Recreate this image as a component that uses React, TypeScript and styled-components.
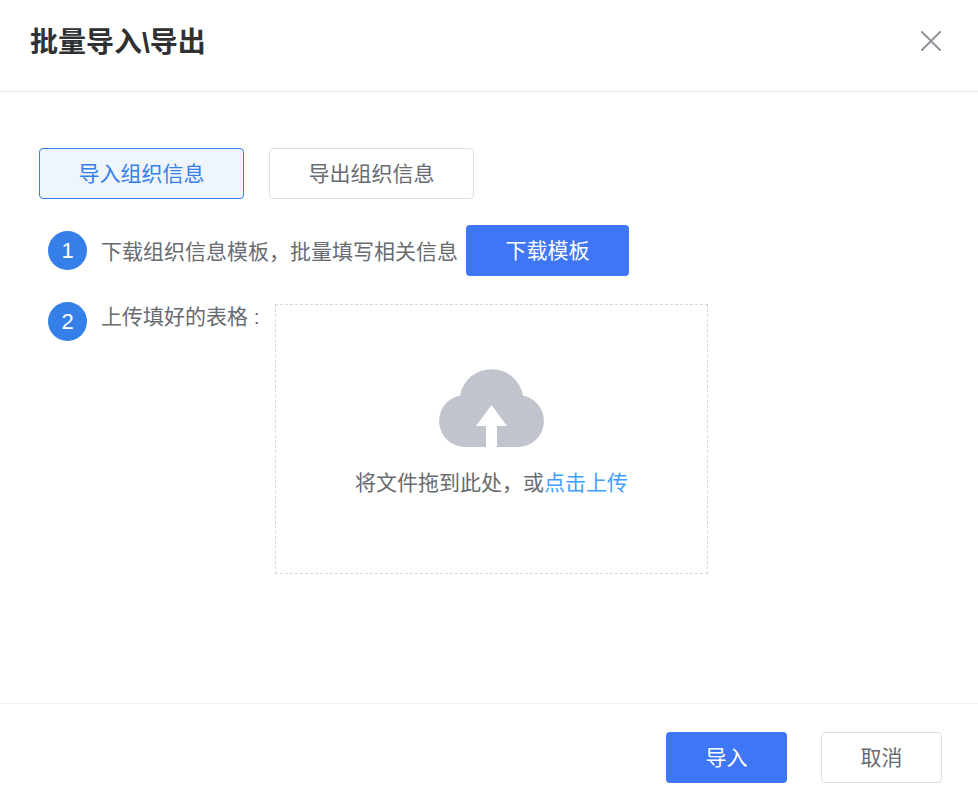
import { createGlobalStyle, styled } from 'styled-components';

const GlobalStyle = createGlobalStyle`
  html,
  body {
    margin: 0;
    padding: 0;
    background: #fff;
  }

  * {
    box-sizing: border-box;
  }
`;

const Dialog = styled.div`
  width: 978px;
  height: 793px;
  display: flex;
  flex-direction: column;
  overflow: hidden;
  background: #fff;
  color: #686b70;
  font-family: 'Liberation Sans', 'Noto Sans CJK SC', sans-serif;
  font-size: 21px;
`;

const Header = styled.header`
  height: 92px;
  flex-shrink: 0;
  display: flex;
  align-items: center;
  justify-content: space-between;
  padding: 0 37px 9px 30px;
  border-bottom: 1px solid #e8e9ed;
`;

const Title = styled.h1`
  margin: 4px 0 0;
  font-size: 28px;
  font-weight: 700;
  line-height: 40px;
  color: #303133;
`;

const CloseButton = styled.button`
  width: 20px;
  height: 20px;
  padding: 0;
  display: block;
  border: 0;
  background: none;
  color: #909399;
`;

const Body = styled.main`
  flex: 1;
  padding: 56px 39px 0;
`;

const Tabs = styled.div`
  display: flex;
  column-gap: 25px;
  margin-bottom: 26px;
`;

const Tab = styled.button<{ $active?: boolean }>`
  width: 205px;
  height: 51px;
  padding: 0 0 4px;
  font: inherit;
  border: 1px solid ${(p) => (p.$active ? '#3580e8' : '#dcdfe6')};
  border-radius: 4px;
  background: ${(p) => (p.$active ? '#eef5fd' : '#fff')};
  color: ${(p) => (p.$active ? '#3580e8' : '#686b70')};
`;

const DownloadRow = styled.div`
  display: flex;
  align-items: center;
  padding-left: 9px;
  height: 51px;
  margin-bottom: 26px;
`;

const UploadRow = styled.div`
  display: flex;
  align-items: flex-start;
  padding-left: 9px;
`;

const StepNumber = styled.span`
  width: 39px;
  height: 39px;
  flex-shrink: 0;
  display: flex;
  align-items: center;
  justify-content: center;
  margin-right: 14px;
  border-radius: 50%;
  background: #3580e8;
  color: #fff;
  font-size: 22px;
`;

const StepText = styled.span`
  white-space: nowrap;
  line-height: 30px;
  padding-top: 2px;
`;

const UploadLabel = styled(StepText)`
  width: 174px;
  flex-shrink: 0;
  margin-top: -2px;
`;

const PrimaryButton = styled.button`
  height: 51px;
  padding: 0 0 4px;
  font: inherit;
  border: 0;
  border-radius: 4px;
  background: #3e76f6;
  color: #fff;
`;

const DownloadButton = styled(PrimaryButton)`
  width: 163px;
  margin-left: 8px;
`;

const DropZone = styled.div`
  width: 433px;
  height: 270px;
  margin-top: 2px;
  display: flex;
  flex-direction: column;
  align-items: center;
  padding-top: 64px;
  border: 1px dashed #d9d9d9;
`;

const CloudIcon = styled.svg`
  display: block;
  margin-bottom: 20px;
`;

const DropText = styled.div`
  line-height: 32px;
  white-space: nowrap;
`;

const UploadLink = styled.em`
  font-style: normal;
  color: #409eff;
`;

const Footer = styled.footer`
  height: 90px;
  flex-shrink: 0;
  display: flex;
  justify-content: flex-end;
  column-gap: 34px;
  padding: 28px 36px 0 0;
  border-top: 1px solid #eeeff2;
`;

const FooterPrimary = styled(PrimaryButton)`
  width: 121px;
`;

const CancelButton = styled.button`
  width: 121px;
  height: 51px;
  padding: 0 0 4px;
  font: inherit;
  border: 1px solid #dcdfe6;
  border-radius: 4px;
  background: #fff;
  color: #686b70;
`;

export default function App() {
  return (
    <>
      <GlobalStyle />
      <Dialog>
        <Header>
          <Title>批量导入\导出</Title>
          <CloseButton aria-label="关闭">
            <svg width="20" height="20" viewBox="0 0 20 20" fill="none">
              <path
                d="M1 1 19 19M19 1 1 19"
                stroke="currentColor"
                strokeWidth="2"
                strokeLinecap="round"
              />
            </svg>
          </CloseButton>
        </Header>
        <Body>
          <Tabs>
            <Tab $active>导入组织信息</Tab>
            <Tab>导出组织信息</Tab>
          </Tabs>
          <DownloadRow>
            <StepNumber>1</StepNumber>
            <StepText>下载组织信息模板，批量填写相关信息</StepText>
            <DownloadButton>下载模板</DownloadButton>
          </DownloadRow>
          <UploadRow>
            <StepNumber>2</StepNumber>
            <UploadLabel>上传填好的表格 :</UploadLabel>
            <DropZone>
              <CloudIcon width="105" height="78" viewBox="0 0 105 78">
                <path
                  d="M26 78A26 26 0 0 1 21 26.5 32 32 0 0 1 84 26.5 26 26 0 0 1 79 78Z"
                  fill="#c0c4cc"
                />
                <path d="M52.5 36 68 57H58V78H47V57H37Z" fill="#fff" />
              </CloudIcon>
              <DropText>
                将文件拖到此处，或<UploadLink>点击上传</UploadLink>
              </DropText>
            </DropZone>
          </UploadRow>
        </Body>
        <Footer>
          <FooterPrimary>导入</FooterPrimary>
          <CancelButton>取消</CancelButton>
        </Footer>
      </Dialog>
    </>
  );
}
